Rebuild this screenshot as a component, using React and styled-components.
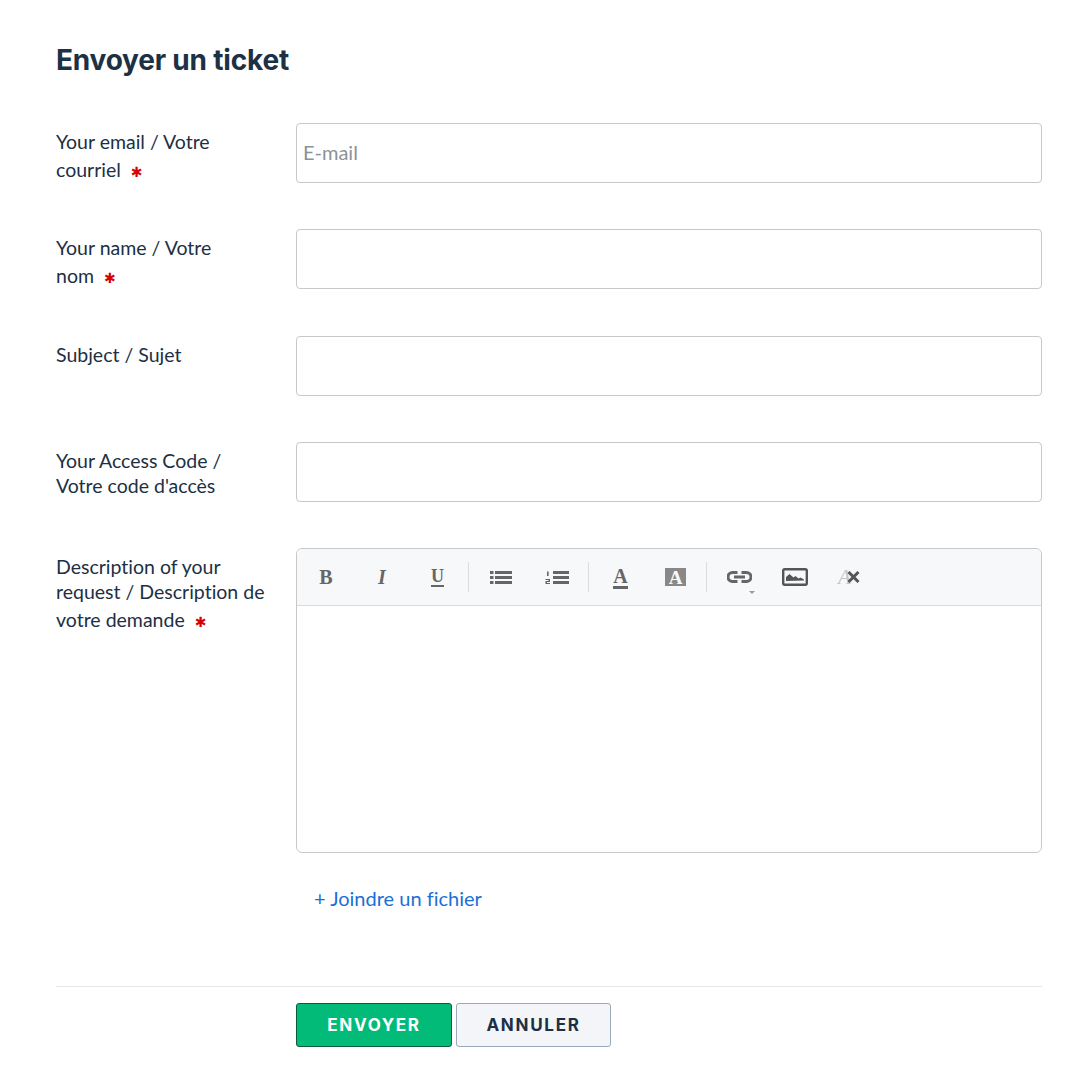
import React from 'react'
import styled, { createGlobalStyle } from 'styled-components'

const GlobalStyle = createGlobalStyle`
  html, body {
    margin: 0;
    background: #fff;
  }
`

const Page = styled.div`
  width: 1077px;
  height: 1089px;
  box-sizing: border-box;
  padding: 41px 35px 0 56px;
  font-family: "Lato", "Open Sans", sans-serif;
  font-variant-ligatures: none;
  color: #1c3044;
`

const Title = styled.h1`
  margin: 0 0 43px;
  font-family: "Inter", sans-serif;
  font-size: 28px;
  line-height: 39px;
  font-weight: 700;
  letter-spacing: -0.2px;
  color: #1c3144;
`

const Row = styled.div`
  display: flex;
  height: ${p => p.$h || 60}px;
  margin-bottom: ${p => p.$gap ?? 46.25}px;
`

const Label = styled.div`
  width: 240px;
  flex: none;
  padding-top: 6px;
  box-sizing: border-box;
  font-size: 19.5px;
  line-height: 25px;
`

const Star = styled.span`
  font-family: "DejaVu Sans", sans-serif;
  font-size: 14px;
  line-height: 37px;
  color: #d90000;
  margin-left: 5px;
`

const Input = styled.input`
  width: 746px;
  height: 60px;
  box-sizing: border-box;
  border: 1px solid #c8c8c8;
  border-radius: 4px;
  padding: 0 6px 2px;
  font-family: inherit;
  font-size: 20px;
  color: #1c3044;
  outline: none;

  &::placeholder {
    color: #8b9299;
    opacity: 1;
  }
`

const Editor = styled.div`
  width: 746px;
  height: 305px;
  box-sizing: border-box;
  border: 1px solid #c8c8c8;
  border-radius: 6px;
  overflow: hidden;
`

const Toolbar = styled.div`
  display: flex;
  align-items: center;
  height: 56px;
  background: #f7f8fa;
  border-bottom: 1px solid #d7dce1;
  padding-left: 1px;
  box-sizing: content-box;
`

const Tool = styled.div`
  position: relative;
  width: ${p => p.$w || 56}px;
  height: 30px;
  display: flex;
  align-items: center;
  justify-content: center;
  color: #666;
  font-family: "Liberation Serif", serif;
  font-size: 20px;
  font-weight: 700;
`

const Underlined = styled.span`
  font-size: ${p => p.$size || 18}px;
  line-height: ${p => p.$size || 18}px;
  border-bottom: ${p => p.$line || 2}px solid #666;
`

const Italic = styled.span`
  font-style: italic;
`

const Inverted = styled.span`
  display: block;
  width: 21px;
  height: 18px;
  background: #888;
  color: #f7f8fa;
  text-align: center;
  font-size: 19px;
  line-height: 20px;
`

const ClearLetter = styled.span`
  font-style: italic;
  font-weight: 400;
  font-size: 21px;
  line-height: 20px;
  color: #c4c4c4;
  margin-right: -4px;
`

const Sep = styled.div`
  width: 1px;
  height: 30px;
  margin: 0 4px 0 3px;
  background: #d9dde1;
  flex: none;
`

const Caret = styled.div`
  position: absolute;
  left: 38px;
  bottom: -2px;
  border: 3px solid transparent;
  border-top-color: #999;
  border-bottom: 0;
`

const AttachRow = styled.div`
  margin: 31px 0 0 258px;
  font-size: 20px;
  line-height: 28px;
  color: #1a6fd8;
`

const Divider = styled.div`
  height: 1px;
  background: #e6e7e9;
  margin: 74px 0 16px;
`

const Actions = styled.div`
  display: flex;
  gap: 4px;
  margin-left: 240px;
`

const Button = styled.button`
  width: ${p => p.$w}px;
  height: 44px;
  box-sizing: border-box;
  border-radius: 3px;
  border: 1px solid ${p => p.$primary ? '#0a5c3c' : '#9aa9bb'};
  background: ${p => p.$primary ? '#03bb78' : '#f3f5f8'};
  color: ${p => p.$primary ? '#fff' : '#1c3044'};
  font-family: "Inter", sans-serif;
  font-size: 17px;
  font-weight: 700;
  letter-spacing: 1.7px;
`

const BulletIcon = () => (
  <svg width="22" height="13" viewBox="0 0 22 13" fill="#666">
    <rect x="0" y="0" width="3.5" height="3" />
    <rect x="0" y="5" width="3.5" height="3" />
    <rect x="0" y="10" width="3.5" height="3" />
    <rect x="5" y="0" width="17" height="3" />
    <rect x="5" y="5" width="17" height="3" />
    <rect x="5" y="10" width="17" height="3" />
  </svg>
)

const NumberIcon = () => (
  <svg width="24" height="13" viewBox="0 0 24 13" fill="#666">
    <rect x="2" y="0.5" width="1.6" height="4.5" />
    <path d="M0.5 8h4.5v3H2v1h3v1H0.5v-3h3V9h-3z" />
    <rect x="8" y="0" width="16" height="3" />
    <rect x="8" y="5" width="16" height="3" />
    <rect x="8" y="10" width="16" height="3" />
  </svg>
)

const LinkIcon = () => (
  <svg width="25" height="12" viewBox="0 0 25 12" fill="none" stroke="#666" strokeWidth="3">
    <path d="M10.5 1.5H5.5a4.5 4.5 0 0 0 0 9h5" />
    <path d="M14.5 1.5h5a4.5 4.5 0 0 1 0 9h-5" />
    <path d="M7 6h11" />
  </svg>
)

const ImageIcon = () => (
  <svg width="26" height="18" viewBox="0 0 26 18">
    <rect x="1.2" y="1.2" width="23.6" height="15.6" rx="1.5" fill="none" stroke="#555" strokeWidth="2.4" />
    <path d="M4 13V9l3.5-3 4 3.5 2-1.5 3 2.5 2-1 3.5 2v1z" fill="#555" />
  </svg>
)

const ClearCross = () => (
  <svg width="13" height="12" viewBox="0 0 13 12">
    <path d="M1.5 1l10 10M11.5 1l-10 10" stroke="#555" strokeWidth="3" />
  </svg>
)

export default function App() {
  return (
    <Page>
      <GlobalStyle />
      <Title>Envoyer un ticket</Title>
      <Row>
        <Label>Your email / Votre<br />courriel <Star>✱</Star></Label>
        <Input placeholder="E-mail" />
      </Row>
      <Row>
        <Label>Your name / Votre<br />nom <Star>✱</Star></Label>
        <Input />
      </Row>
      <Row>
        <Label>Subject / Sujet</Label>
        <Input />
      </Row>
      <Row>
        <Label>Your Access Code /<br />Votre code d'accès</Label>
        <Input />
      </Row>
      <Row $h={305} $gap={0}>
        <Label>Description of your<br />request / Description de<br />votre demande <Star>✱</Star></Label>
        <Editor>
          <Toolbar>
            <Tool>B</Tool>
            <Tool><Italic>I</Italic></Tool>
            <Tool $w={55}><Underlined>U</Underlined></Tool>
            <Sep />
            <Tool><BulletIcon /></Tool>
            <Tool><NumberIcon /></Tool>
            <Sep />
            <Tool $w={55}><Underlined $size={20} $line={3}>A</Underlined></Tool>
            <Tool $w={55}><Inverted>A</Inverted></Tool>
            <Sep />
            <Tool><LinkIcon /><Caret /></Tool>
            <Tool><ImageIcon /></Tool>
            <Tool $w={52}><ClearLetter>A</ClearLetter><ClearCross /></Tool>
          </Toolbar>
        </Editor>
      </Row>
      <AttachRow>+ Joindre un fichier</AttachRow>
      <Divider />
      <Actions>
        <Button $primary $w={156}>ENVOYER</Button>
        <Button $w={155}>ANNULER</Button>
      </Actions>
    </Page>
  )
}
